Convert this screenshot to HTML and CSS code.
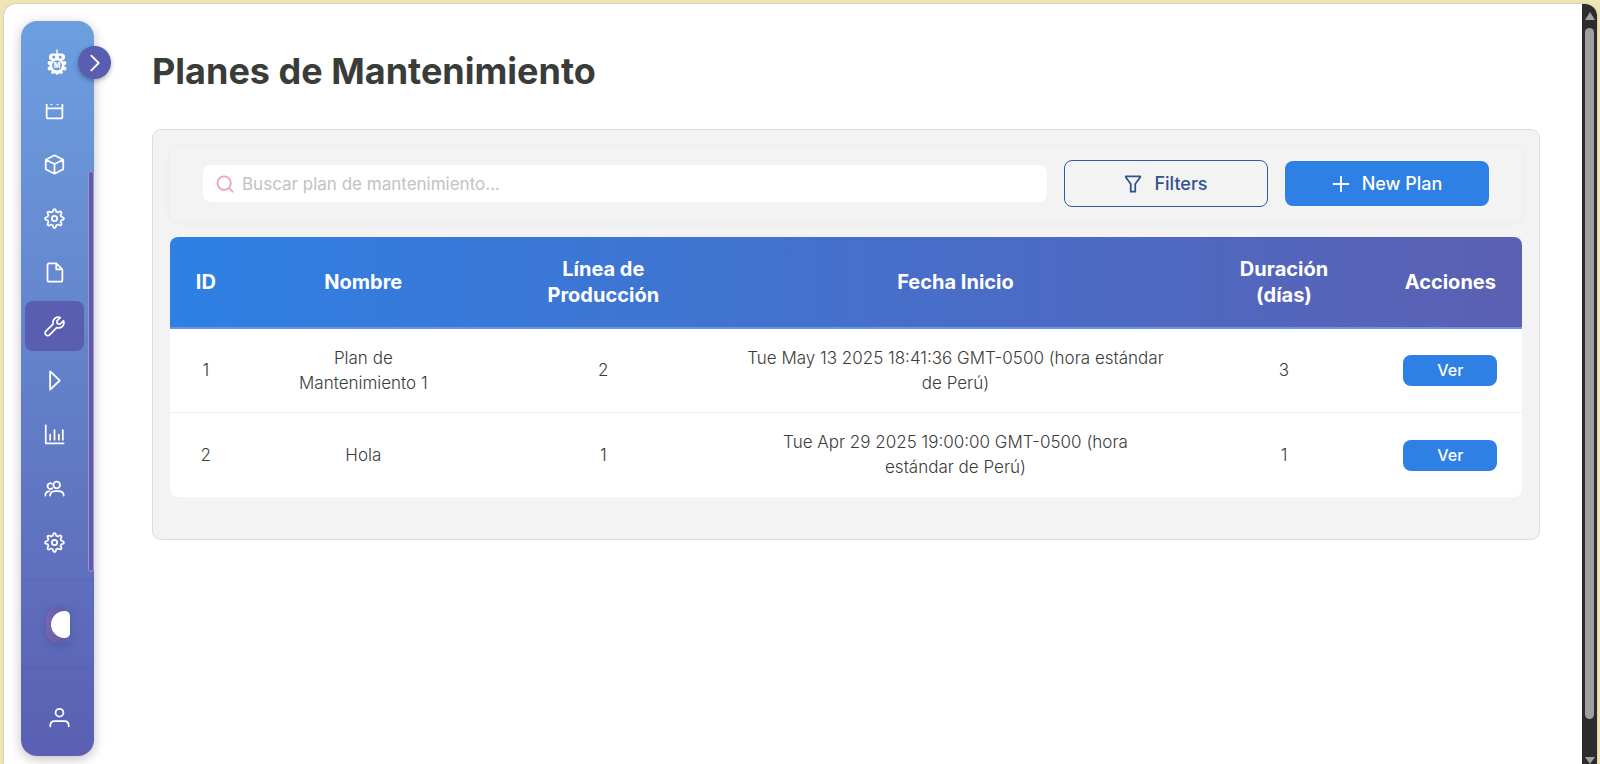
FILE: index.html
```html
<!DOCTYPE html>
<html lang="es">
<head>
<meta charset="utf-8">
<title>Planes de Mantenimiento</title>
<link rel="stylesheet" href="styles.css">
</head>
<body>
<div class="window">
  <aside class="sidebar">
    <header class="brand">
      <svg class="logo" viewBox="0 0 20 26" aria-hidden="true">
        <path d="M10 1v4" stroke="#fff" stroke-width="1.4" stroke-linecap="round"/>
        <rect x="2" y="4.500" width="16" height="7" rx="3.500" fill="#fff"/>
        <circle cx="6.800" cy="8" r="1.500" fill="#6b9bdd"/><circle cx="13.200" cy="8" r="1.500" fill="#6b9bdd"/>
        <g fill="#fff"><circle cx="10" cy="17" r="7.400"/><circle cx="2.500" cy="14" r="1.900"/><circle cx="17.500" cy="14" r="1.900"/><circle cx="2.500" cy="19.500" r="1.900"/><circle cx="17.500" cy="19.500" r="1.900"/><circle cx="6" cy="23.300" r="1.700"/><circle cx="14" cy="23.300" r="1.700"/><circle cx="10" cy="24.200" r="1.500"/></g>
        <circle cx="10" cy="16.500" r="4.900" fill="#6a99dc"/>
        <text class="logo-letter" x="10" y="19" text-anchor="middle">M</text>
      </svg>
      <button class="expand" type="button" aria-label="Expandir menú">
        <svg viewBox="0 0 24 24"><path d="M8 4l8 8-8 8"/></svg>
      </button>
    </header>
    <nav class="nav" aria-label="Principal">
      <a class="item" href="#" aria-label="Calendario"><svg viewBox="0 0 24 24"><rect x="3" y="2" width="18" height="19" rx="2"/><path d="M3 9.500h18M8.500 2v3M15.500 2v3"/></svg></a>
      <a class="item" href="#" aria-label="Productos"><svg viewBox="0 0 24 24"><path d="M12 1.500 22 6.500v11L12 22.500 2 17.500v-11zM2 6.500l10 5 10-5M12 11.500v11"/></svg></a>
      <a class="item" href="#" aria-label="Procesos"><svg viewBox="0 0 24 24"><use href="#gear"/></svg></a>
      <a class="item" href="#" aria-label="Documentos"><svg viewBox="0 0 24 24"><path d="M14 1.500H6a2 2 0 0 0-2 2v17a2 2 0 0 0 2 2h13a2 2 0 0 0 2-2V8.500zM14 1.500v7h7"/></svg></a>
      <a class="item active" href="#" aria-label="Mantenimiento" aria-current="page"><svg viewBox="0 0 24 24"><path d="M22.300 5.600 18.300 9.300 15.200 8.700 14.700 5.700 18.500 1.800C14.500.3 9.500 3 10.300 9.300L2.200 17.300a2.900 2.900 0 0 0 4.200 4.300l8.100-8.200C20 14.500 24 10.500 22.300 5.600z"/></svg></a>
      <a class="item" href="#" aria-label="Ejecución"><svg viewBox="0 0 24 24"><path d="M7 1.500v21l11-10.500z"/></svg></a>
      <a class="item" href="#" aria-label="Reportes"><svg viewBox="0 0 24 24"><path d="M2 1.500v20.500h20.500M7 12v6M12 7v11M17 12v6M21.500 7v11"/></svg></a>
      <a class="item" href="#" aria-label="Usuarios"><svg viewBox="0 0 24 24"><circle cx="14.500" cy="8" r="3.800"/><path d="M7 20c0-4 2.500-5 6-5h3.500c3.500 0 6 1 6 5M9 6.500a3.200 3.200 0 1 0 .5 5M1.500 20c0-3 1.500-4.500 4.500-5"/></svg></a>
      <a class="item" href="#" aria-label="Configuración"><svg viewBox="0 0 24 24"><g id="gear"><circle cx="12" cy="12" r="3"/><path d="M10 4.300Q10.500 1.200 12 1.200T14 4.300L16 5.100Q18.600 3.300 19.600 4.400T18.900 8L19.700 10Q22.800 10.500 22.800 12T19.700 14L18.900 16Q20.700 18.600 19.600 19.600T16 18.900L14 19.700Q13.500 22.800 12 22.800T10 19.700L8 18.900Q5.400 20.700 4.400 19.600T5.100 16L4.300 14Q1.200 13.500 1.200 12T4.300 10L5.100 8Q3.300 5.400 4.400 4.400T8 5.100Z"/></g></svg></a>
      <span class="nav-thumb"></span>
    </nav>
    <div class="mode"><input class="switch" type="checkbox" aria-label="Modo oscuro"></div>
    <div class="account">
      <a class="user" href="#" aria-label="Perfil"><svg viewBox="0 0 24 24"><circle cx="12" cy="6.500" r="4.500"/><path d="M1.500 22v-1c0-3.500 2-5 5-5h11c3 0 5 1.500 5 5v1"/></svg></a>
    </div>
  </aside>

  <main class="main">
    <h1 class="title">Planes de Mantenimiento</h1>
    <section class="panel">
      <form class="toolbar">
        <label class="search">
          <svg viewBox="0 0 20 20" aria-hidden="true"><circle cx="9" cy="9" r="7.500"/><path d="m14.500 14.500 4 4"/></svg>
          <input type="text" aria-label="Buscar plan" placeholder="Buscar plan de mantenimiento...">
        </label>
        <button class="button outline" type="button">
          <svg viewBox="0 0 20 20" aria-hidden="true"><path d="M2 1.500h16v1L12.500 10v8.500h-5V10L2 2.500z"/></svg>Filters
        </button>
        <button class="button primary" type="button">
          <svg viewBox="0 0 20 20" aria-hidden="true"><path d="M10 1v18M1 10h18"/></svg>New Plan
        </button>
      </form>
      <table class="plans">
        <colgroup><col class="c-id"><col class="c-name"><col class="c-line"><col class="c-date"><col class="c-days"><col class="c-actions"></colgroup>
        <thead>
          <tr><th>ID</th><th>Nombre</th><th>Línea de<br>Producción</th><th>Fecha Inicio</th><th>Duración<br>(días)</th><th>Acciones</th></tr>
        </thead>
        <tbody>
          <tr><td>1</td><td>Plan de<br>Mantenimiento 1</td><td>2</td><td>Tue May 13 2025 18:41:36 GMT-0500 (hora estándar<br>de Perú)</td><td>3</td><td><button class="view" type="button">Ver</button></td></tr>
          <tr><td>2</td><td>Hola</td><td>1</td><td>Tue Apr 29 2025 19:00:00 GMT-0500 (hora<br>estándar de Perú)</td><td>1</td><td><button class="view" type="button">Ver</button></td></tr>
        </tbody>
      </table>
    </section>
  </main>

  <div class="scrollbar" aria-hidden="true">
    <span class="arrow up"></span>
    <span class="thumb"></span>
    <span class="arrow down"></span>
  </div>
</div>
</body>
</html>
```
FILE: styles.css
```css
* { box-sizing: border-box; }

body {
  margin: 0;
  height: 100vh;
  padding: 4px 3px 0 4px;
  overflow: hidden;
  background: #eee4b6;
  color: #3a3c3a;
  font-family: Inter, "Open Sans", sans-serif;
  font-size: 17px;
}

button, input { font: inherit; }
svg { display: block; fill: none; stroke: currentColor; }

.window {
  display: flex;
  height: 100%;
  overflow: hidden;
  background: #fff;
  border-radius: 12px 12px 0 0;
  box-shadow: 0 0 2px rgba(0, 0, 0, .25);
}

/* Sidebar */
.sidebar {
  display: flex;
  flex-direction: column;
  flex: none;
  width: 73px;
  margin: 17px 0 8px 17px;
  border-radius: 16px;
  background: linear-gradient(#6c9fe0, #5a5fb2);
  box-shadow: 0 3px 12px rgba(0, 0, 0, .25);
  color: #fff;
}

.brand {
  position: relative;
  display: flex;
  flex: none;
  justify-content: center;
  height: 83px;
  padding: 28px 1px 0 0;
}

.logo { width: 20px; height: 26px; stroke: none; }
.logo-letter { fill: #fff; font-size: 7px; font-weight: 800; }

.expand {
  position: absolute;
  top: 25px;
  right: -17px;
  display: grid;
  place-items: center;
  width: 33px;
  height: 33px;
  padding: 0;
  border: 0;
  border-radius: 50%;
  background: #5a5eb0;
  box-shadow: 0 2px 5px rgba(0, 0, 0, .3);
  color: #fff;
}

.expand svg { width: 22px; height: 22px; stroke-width: 2; stroke-linecap: round; stroke-linejoin: round; }

.nav {
  position: relative;
  display: flex;
  flex: 1;
  flex-direction: column;
  justify-content: flex-end;
  gap: 4px;
  min-height: 0;
  overflow: hidden;
  padding: 0 10px 13px 4px;
}

.item {
  display: grid;
  flex: none;
  place-items: center;
  height: 50px;
  border-radius: 8px;
  color: #fff;
}

.item.active { background: #5a5eb0; }

.item svg, .user svg {
  width: 21px;
  height: 21px;
  stroke-width: 2;
  stroke-linecap: round;
  stroke-linejoin: round;
}

.nav-thumb {
  position: absolute;
  right: 0;
  top: 14%;
  bottom: 8px;
  width: 6px;
  border: 1px solid #a98cc8;
  border-radius: 3px;
  background: #5a5eb0;
}

.mode, .account {
  display: grid;
  flex: none;
  place-items: center;
  height: 88px;
  padding-left: 4px;
  border-top: 1px solid rgba(60, 70, 150, .18);
}

.mode { padding-left: 0; }
.account { padding-top: 9px; }
.user { color: #fff; }

.switch {
  display: flex;
  align-items: center;
  justify-content: flex-end;
  appearance: none;
  width: 24px;
  height: 36px;
  margin: 0;
  border-radius: 12px 4px 4px 12px;
  background: linear-gradient(90deg, #7a63b0, #5f5fa8 70%, transparent);
  box-shadow: 0 2px 6px rgba(60, 50, 120, .3);
}

.switch::before {
  content: "";
  width: 19px;
  height: 27px;
  border-radius: 14px 5px 5px 14px;
  background: #fff;
}

/* Content */
.main { flex: 1; min-width: 0; padding: 43px 42px 0 58px; }

.title { margin: 0 0 34px; font-size: 36px; line-height: 48px; font-weight: 700; }

.panel {
  padding: 16px 17px 42px;
  border: 1px solid #dcdcdc;
  border-radius: 9px;
  background: #f3f3f3;
}

.toolbar {
  display: flex;
  align-items: center;
  gap: 17px;
  margin: 0 0 16px;
  padding: 14px 33px;
  border-radius: 9px;
  box-shadow: 0 1px 8px rgba(0, 0, 0, .04);
}

.search {
  display: flex;
  align-items: center;
  flex: 1;
  gap: 8px;
  height: 37px;
  padding: 0 13px;
  border-radius: 8px;
  background: #fff;
}

.search svg { width: 18px; height: 18px; color: #eba4b8; stroke-width: 2; stroke-linecap: round; }

.search input { flex: 1; min-width: 0; padding: 0; border: 0; outline: 0; background: none; }
.search input::placeholder { color: #c2c2c4; }

.button {
  display: flex;
  align-items: center;
  justify-content: center;
  gap: 12px;
  width: 204px;
  height: 45px;
  padding: 0;
  border: 0;
  border-radius: 8px;
  font-size: 18px;
  font-weight: 500;
}

.button svg { width: 18px; height: 18px; stroke-width: 2; stroke-linejoin: round; }
.outline { height: 47px; border: 1px solid #2f5b9e; background: transparent; color: #31528f; }
.primary { background: #2e80e4; color: #fff; }

/* Table */
.plans {
  width: 100%;
  table-layout: fixed;
  border-collapse: separate;
  border-spacing: 0;
  border-radius: 8px;
  overflow: hidden;
  background: #fff;
  text-align: center;
}

.c-id { width: 5.300%; }
.c-name { width: 18%; }
.c-line { width: 17.500%; }
.c-date { width: 34.600%; }
.c-days { width: 14%; }

.plans thead { background: linear-gradient(90deg, #2e80e4, #5b60b3); color: #fff; }
.plans th { height: 92px; padding: 0; border-bottom: 2px solid #6b95dc; font-size: 20px; line-height: 26px; font-weight: 700; }
.plans td { height: 84px; padding: 0; line-height: 25px; font-weight: 300; white-space: nowrap; }
.plans tbody tr:not(:last-child) td { border-bottom: 1px solid #eee; }

.view {
  width: 94px;
  height: 31px;
  padding: 0;
  border: 0;
  border-radius: 8px;
  background: #2e80e4;
  color: #fff;
  font-size: 16px;
  font-weight: 500;
}

/* Page scrollbar */
.scrollbar {
  display: flex;
  flex: none;
  flex-direction: column;
  align-items: center;
  width: 15px;
  padding-top: 8px;
  background: #2c2c2c;
}

.thumb { flex: 1; width: 9px; margin: 8px 0 38px; border-radius: 5px; background: #9f9f9f; }
.arrow { border: 5px solid transparent; }
.up { border-top: 0; border-bottom: 8px solid #9f9f9f; }
.down { border-bottom: 0; border-top: 7px solid #9f9f9f; }
```
